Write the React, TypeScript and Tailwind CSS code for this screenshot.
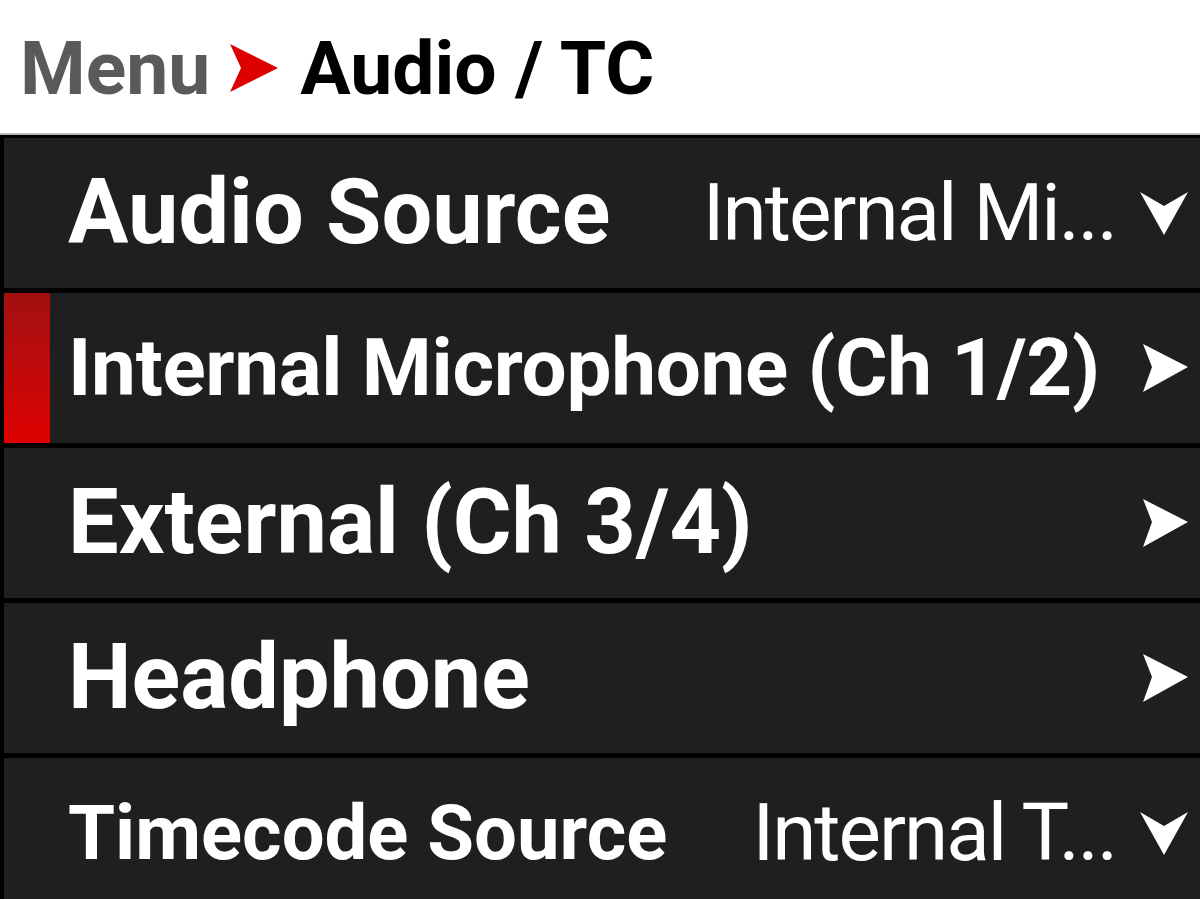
import React from "react";

const RightArrow = () => (
  <svg width="46" height="48" viewBox="0 0 46 48" className="shrink-0">
    <polygon points="1,0 46,23 1,48 10,23" fill="#ffffff" />
  </svg>
);

const DownArrow = () => (
  <svg width="48" height="44" viewBox="0 0 48 44" className="shrink-0">
    <polygon points="0,1 24,15 48,1 24,44" fill="#ffffff" />
  </svg>
);

type Row = {
  label: string;
  size: string;
  value?: string;
  selected?: boolean;
};

const rows: Row[] = [
  { label: "Audio Source", size: "text-[90px]", value: "Internal Mi..." },
  { label: "Internal Microphone (Ch 1/2)", size: "text-[80px] tracking-[-0.3px]", selected: true },
  { label: "External (Ch 3/4)", size: "text-[90px]" },
  { label: "Headphone", size: "text-[90px]" },
  { label: "Timecode Source", size: "text-[76px]", value: "Internal T..." },
];

export default function App() {
  return (
    <div
      className="w-[1200px] h-[899px] overflow-hidden bg-white flex flex-col"
      style={{ fontFamily: "Roboto, 'Liberation Sans', sans-serif" }}
    >
      <div className="h-[133px] shrink-0 flex items-center pl-[20px] pt-[3px] leading-none">
        <span className="text-[75px] font-bold text-[#5a5a5a]">Menu</span>
        <svg width="48" height="48" viewBox="0 0 48 48" className="ml-[20px] mr-[22px]">
          <polygon points="0,0 48,24 0,48 11,24" fill="#dd0000" />
        </svg>
        <span className="text-[75px] font-bold text-black">Audio / TC</span>
      </div>
      <div className="h-[2px] shrink-0 bg-[#b8b8b8]" />
      <div className="flex-1 bg-black pl-[4px] pt-[3px] flex flex-col gap-[5px]">
        {rows.map((r) => (
          <div
            key={r.label}
            className="h-[150px] shrink-0 bg-[#1f1f1f] flex items-center relative pr-[12px] leading-none"
          >
            {r.selected && (
              <div className="absolute left-0 top-0 bottom-0 w-[46px] bg-gradient-to-b from-[#a20f10] to-[#de0000]" />
            )}
            <span className={`pl-[64px] ${r.size} font-bold text-white whitespace-nowrap`}>
              {r.label}
            </span>
            <div className="flex-1" />
            {r.value ? (
              <>
                <span className="text-[80px] font-normal text-white whitespace-nowrap tracking-[-2px] mr-[24px]">
                  {r.value}
                </span>
                <DownArrow />
              </>
            ) : (
              <RightArrow />
            )}
          </div>
        ))}
      </div>
    </div>
  );
}
